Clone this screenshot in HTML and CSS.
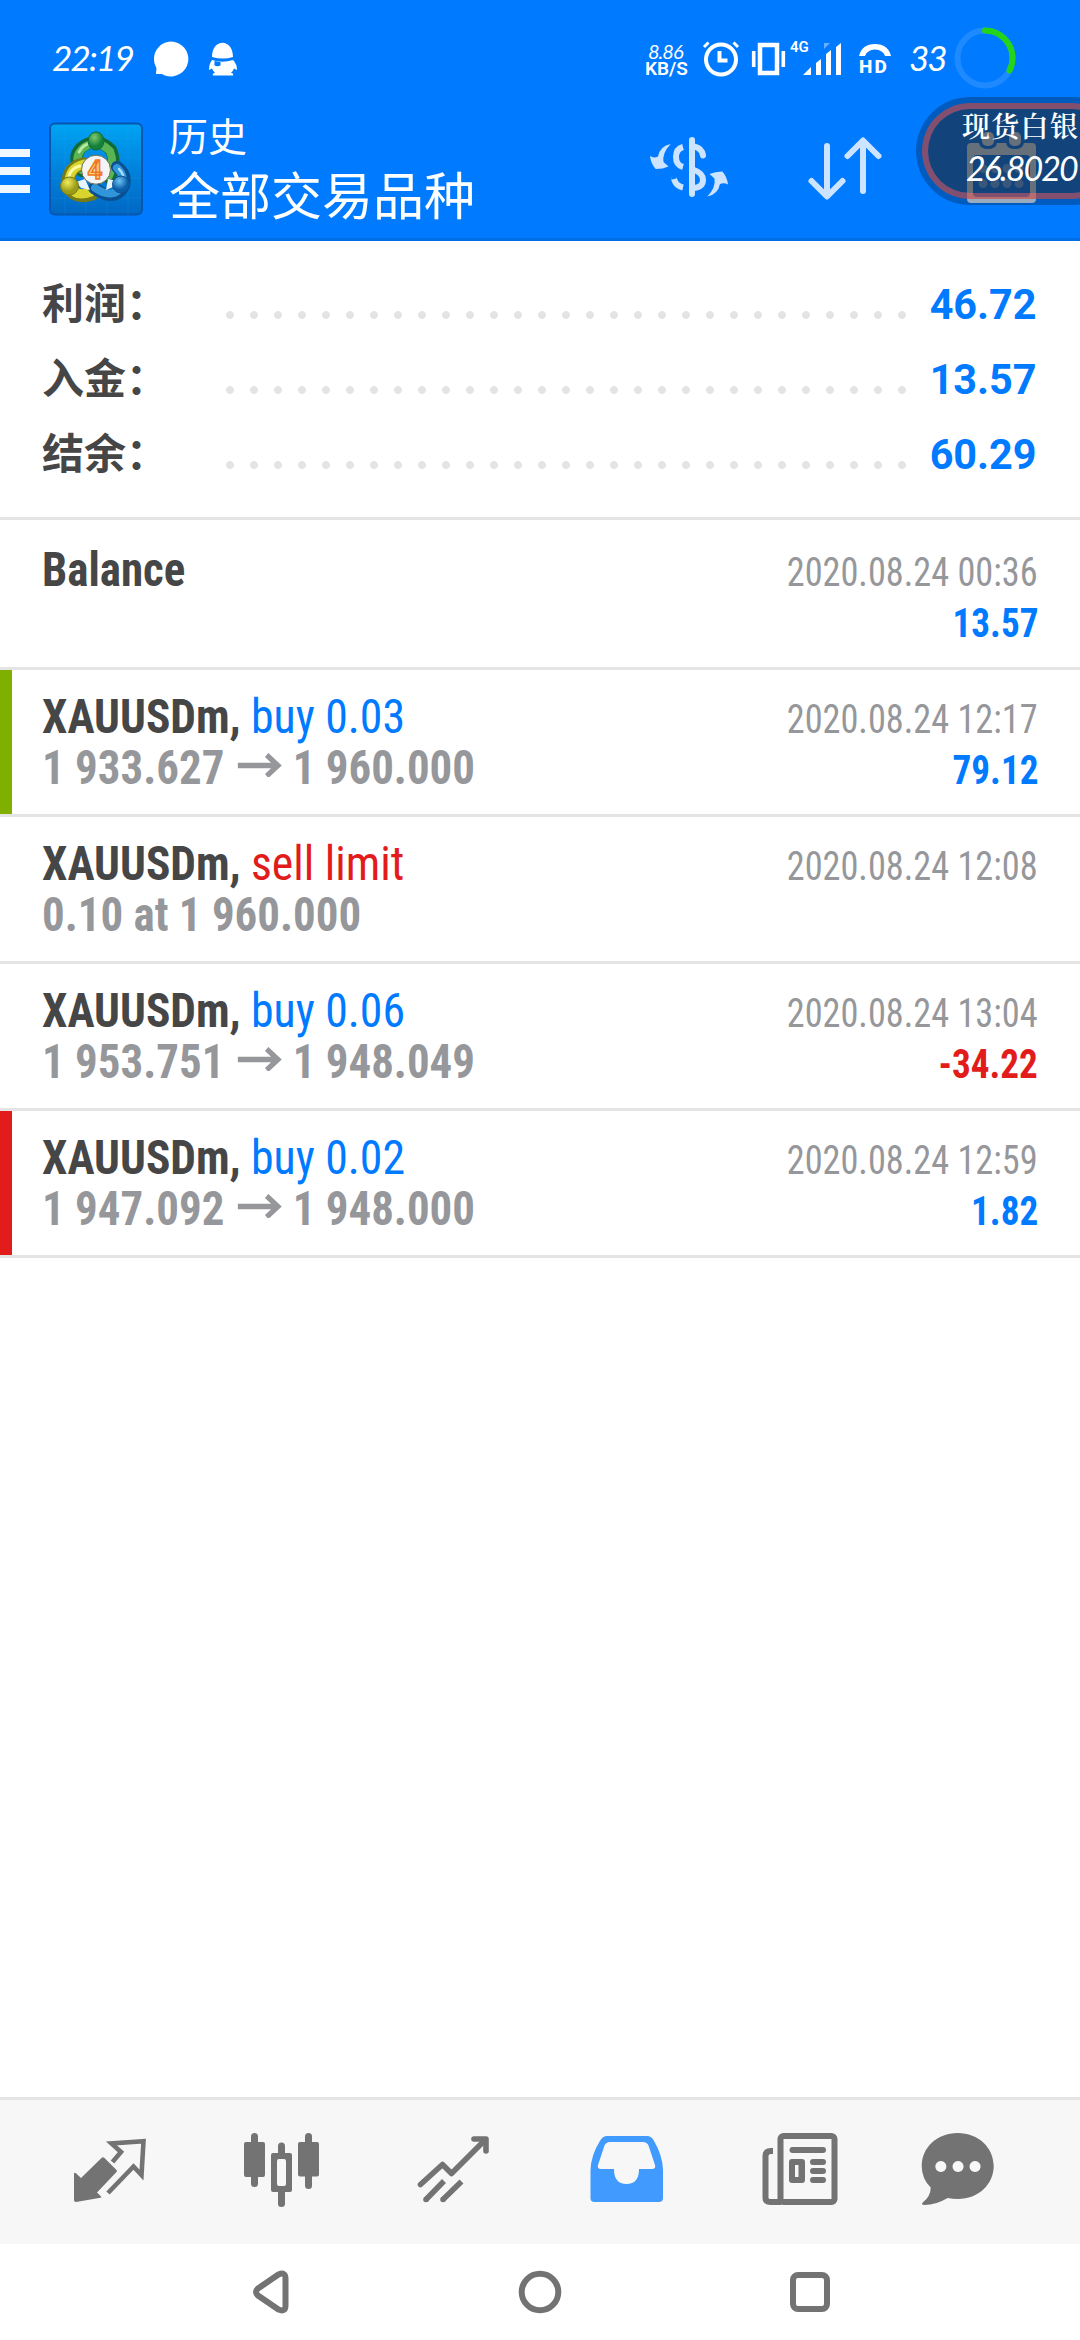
FILE: index.html
```html
<!DOCTYPE html>
<html lang="zh-CN">
<head>
<meta charset="utf-8">
<title>历史</title>
<link rel="stylesheet" href="styles.css">
</head>
<body>
<header class="top">
  <div class="status">
    <span class="clock">22:19</span>
    <svg class="notices" width="90" height="40" viewBox="150 39 90 40" fill="#fff">
      <path d="M171 41.5a17.5 17.500 0 1 1-6 34q-2-.9-3-1.500h-6l.5-6A17.500 17.500 0 0 1 171 41.500Z"/>
      <path d="M212 57c0-19 21-19 21 0q-10 3-21 0ZM212 60q10 3.500 21 0 4 4 4 10l-3-1.500q-1 3-3 4 3 1 2 3h-20q-1-2 2-3-2-1-3-4l-3 1.500q0-6 3-10Z"/>
      <path d="M214.500 61l6 1v3.500q-3 1.500-6 0Z" fill="#007aff"/>
    </svg>
    <div class="speed"><span class="speed-value">8.86</span><span class="speed-unit">KB/S</span></div>
    <svg class="signals" width="90" height="40" viewBox="700 39 90 40" fill="none" stroke="#fff">
      <circle cx="721" cy="59.500" r="15" stroke-width="4"/>
      <path d="M719.500 51v9.500h8" stroke-width="4"/>
      <path d="M704 47l4.500-4.500M738 47l-4.500-4.500" stroke-width="3"/>
      <rect x="760" y="45" width="17" height="28" stroke-width="4.500"/>
      <path d="M753.700 51v16M783.300 51v16" stroke-width="3.600"/>
    </svg>
    <span class="net">4G</span>
    <svg class="bars" width="40" height="40" viewBox="803 39 40 40" fill="#fff">
      <path d="M803 75h8v-8ZM816 75v-12l5-4v16ZM826 75v-21l5-4v25ZM836 75V47l5-4v32Z"/>
      <path d="M824 43h6l-6 6Z" opacity=".4"/>
    </svg>
    <div class="hd">
      <svg width="32" height="13" viewBox="859 43 32 13"><path d="M859 55q3-12 16-12t16 12h-6q-2-6-10-6.500-8 .5-10 6.500Z" fill="#fff"/></svg>
      <span>HD</span>
    </div>
    <span class="battery">33</span>
    <svg class="ring" width="62" height="62" viewBox="-31 -31 62 62" fill="none" stroke-width="6">
      <circle r="27.500" stroke="#1f8aff"/>
      <path d="M0-27.500A27.500 27.500 0 0 1 24.500 12.500" stroke="#24d41a" stroke-linecap="round"/>
    </svg>
  </div>
  <div class="toolbar">
    <div class="menu"><i></i><i></i><i></i></div>
    <svg class="logo" width="96" height="96" viewBox="48 121 96 96">
      <defs>
        <linearGradient id="sky" x2="0" y2="1"><stop stop-color="#00a4f4"/><stop offset=".5" stop-color="#0083dd"/><stop offset="1" stop-color="#0068c4"/></linearGradient>
        <radialGradient id="gr" cx=".4" cy=".3"><stop stop-color="#7fc96d"/><stop offset="1" stop-color="#15803a"/></radialGradient>
        <radialGradient id="ye" cx=".4" cy=".3"><stop stop-color="#f1ec5e"/><stop offset="1" stop-color="#9c9c18"/></radialGradient>
        <radialGradient id="bl" cx=".4" cy=".3"><stop stop-color="#6cc4f2"/><stop offset="1" stop-color="#0a5ea8"/></radialGradient>
      </defs>
      <rect x="50" y="123.500" width="92" height="91" rx="5" fill="url(#sky)" stroke="#0757ad" stroke-width="2"/>
      <path d="M65 124v90M86 124v90M107 124v90M128 124v90M51 138h90M51 158h90M51 178h90M51 198h90" stroke="#3bb2f5" stroke-opacity=".15"/>
      <g fill="none" stroke-linecap="round">
        <path d="M82 171Q71 158 81 148Q96 135 111 150Q117 164 109 178" stroke="#126a35" stroke-width="12"/>
        <path d="M82 170Q73 158 82 149Q96 137 110 151Q115 164 109 176" stroke="#59b454" stroke-width="8"/>
        <path d="M79 152Q83 144 92 143" stroke="#b8e8a2" stroke-width="3"/>
        <path d="M84 164Q67 167 68 185Q74 200 92 194" stroke="#777b16" stroke-width="13"/>
        <path d="M84 164Q68 168 69 185Q75 198 91 192" stroke="#d9d52c" stroke-width="9"/>
        <path d="M69 176Q71 168 80 166" stroke="#fbf8a0" stroke-width="3"/>
        <path d="M117 167Q127 174 124 186Q115 203 94 188" stroke="#0a5093" stroke-width="12"/>
        <path d="M117 168Q125 175 122 186Q113 200 95 188" stroke="#3195da" stroke-width="8"/>
        <path d="M119 169Q125 175 123 182" stroke="#a9ddf8" stroke-width="2.500"/>
      </g>
      <path d="M76 182l9-3 5 11-9-2ZM106 190l2-11 9 2-4 6Z" fill="#e7f4fb"/>
      <ellipse cx="96" cy="141" rx="8" ry="9" fill="url(#gr)" stroke="#126a35"/>
      <circle cx="69.500" cy="186" r="9" fill="url(#ye)" stroke="#777b16"/>
      <circle cx="121" cy="184.500" r="8.500" fill="url(#bl)" stroke="#0a5093"/>
      <circle cx="96" cy="169.700" r="14.500" fill="#f4f4f5" stroke="#6a6f58"/>
      <text class="logo-digit" x="95" y="179" text-anchor="middle">4</text>
    </svg>
    <div class="titles"><div class="title">历史</div><div class="subtitle">全部交易品种</div></div>
    <svg class="tools" width="406" height="84" viewBox="644 127 406 84" fill="none" stroke="#cce4ff" stroke-width="6" stroke-linecap="round">
      <g fill="#cce4ff" stroke="none">
        <path id="turn" d="M671.700 144Q663 153 664.500 162L669.500 166.500Q664 169 656.700 169Q652 164 651 156Q655 158.500 659 156.500Q661 146 671.700 144Z"/>
        <use href="#turn" transform="rotate(180 690 170.300)"/>
      </g>
      <path d="M693 140v54"/>
      <path d="M684 147Q677 149 677 157T684 167" stroke-linecap="butt"/>
      <path d="M695 146.500Q703 148 704 155.500M695 170Q704 173 704 180T695 188"/>
      <path d="M675 179Q677 186 684 187.500" stroke-linecap="butt"/><circle cx="675" cy="179" r=".1"/>
      <path d="M828 146v50M812.500 181L828 196.500 843.500 181M864 191v-50M848.500 156L864 140.500 879.500 156" stroke-linejoin="round"/>
      <g fill="#cce4ff" stroke="none">
        <path fill-rule="evenodd" d="M972 143h8q1 6 9 6t9-6h9q1 6 9 6t9-6h8q4 0 4 4v52q0 4-4 4h-61q-4 0-4-4v-52q0-4 4-4ZM978 155q-4 0-4 4v34q0 4 4 4h49q4 0 4-4v-34q0-4-4-4Z"/>
        <rect x="983" y="132" width="12" height="14" rx="5"/><rect x="1010" y="132" width="12" height="14" rx="5"/>
        <g opacity=".45"><circle cx="984" cy="168.500" r="4.500"/><circle cx="996" cy="168.500" r="4.500"/><circle cx="1008" cy="168.500" r="4.500"/><circle cx="1020" cy="168.500" r="4.500"/><circle cx="984" cy="183.500" r="4.500"/><circle cx="996" cy="183.500" r="4.500"/><circle cx="1008" cy="183.500" r="4.500"/><circle cx="1020" cy="183.500" r="4.500"/></g>
      </g>
    </svg>
  </div>
</header>
<main class="history">
  <section class="summary">
    <div class="sum"><span class="label">利润：</span><i class="dots"></i><b>46.72</b></div>
    <div class="sum"><span class="label">入金：</span><i class="dots"></i><b>13.57</b></div>
    <div class="sum"><span class="label">结余：</span><i class="dots"></i><b>60.29</b></div>
  </section>
  <article class="deal first">
    <div class="line"><span class="symbol balance">Balance</span><time>2020.08.24 00:36</time></div>
    <div class="line"><span class="value">13.57</span></div>
  </article>
  <article class="deal tp">
    <div class="line"><span class="symbol">XAUUSDm,</span><span class="side">buy 0.03</span><time>2020.08.24 12:17</time></div>
    <div class="line"><span class="price">1 933.627<svg class="arrow" width="48" height="24" viewBox="0 0 48 24"><path d="M0 12.500H42M31 2L43 12.500 31 23" fill="none" stroke="#96979b" stroke-width="5.500"/></svg>1 960.000</span><span class="value">79.12</span></div>
  </article>
  <article class="deal">
    <div class="line"><span class="symbol">XAUUSDm,</span><span class="side sell">sell limit</span><time>2020.08.24 12:08</time></div>
    <div class="line"><span class="price">0.10 at 1 960.000</span></div>
  </article>
  <article class="deal">
    <div class="line"><span class="symbol">XAUUSDm,</span><span class="side">buy 0.06</span><time>2020.08.24 13:04</time></div>
    <div class="line"><span class="price">1 953.751<svg class="arrow" width="48" height="24" viewBox="0 0 48 24"><path d="M0 12.500H42M31 2L43 12.500 31 23" fill="none" stroke="#96979b" stroke-width="5.500"/></svg>1 948.049</span><span class="value loss">-34.22</span></div>
  </article>
  <article class="deal sl">
    <div class="line"><span class="symbol">XAUUSDm,</span><span class="side">buy 0.02</span><time>2020.08.24 12:59</time></div>
    <div class="line"><span class="price">1 947.092<svg class="arrow" width="48" height="24" viewBox="0 0 48 24"><path d="M0 12.500H42M31 2L43 12.500 31 23" fill="none" stroke="#96979b" stroke-width="5.500"/></svg>1 948.000</span><span class="value">1.82</span></div>
  </article>
</main>
<nav class="tabs">
  <svg viewBox="24 2100 172 144"><path d="M74 2174q0-2 2-.7l5 4.700 20.500-20q1.500-1.500 3 0l12 12q1 1 0 2l-19.500 20.500 4 4q1 1-.5 1.200L76 2202q-2 0-2-2Z"/><path d="M112.500 2162l8.500-10-9.500-8.500L143.500 2141.300 141.500 2175l-8-8.500L108 2193" fill="none" stroke="#737373" stroke-width="4.600"/></svg>
  <svg viewBox="196 2100 172 144"><rect x="244" y="2142" width="21" height="35" rx="2"/><rect x="251" y="2133" width="7" height="54" rx="3.500"/><rect x="298" y="2142" width="21" height="34.500" rx="2"/><rect x="305" y="2133" width="7" height="56" rx="3.500"/><path fill-rule="evenodd" d="M278 2153v-7q0-3.500 3.500-3.500t3.500 3.500v7h5q2 0 2 2v35q0 2-2 2h-5v12q0 3-3.500 3t-3.500-3v-12h-5q-2 0-2-2v-35q0-2 2-2ZM279 2159q-2 0-2 2v23q0 2 2 2h5q2 0 2-2v-23q0-2-2-2Z"/></svg>
  <svg viewBox="368 2100 172 144" class="stroked"><path d="M420.500 2184.500L442.500 2164.500 451.500 2173.500 485 2140"/><path d="M474 2139H486V2151" /><path d="M426 2199.500h.1M443 2199.500h.1"/><path d="M426 2199.500L444 2181M443 2199.500L461.500 2181.500" stroke-linecap="butt"/></svg>
  <svg viewBox="540 2100 172 144" class="active"><path fill-rule="evenodd" d="M607 2136h40q4 0 6.500 4 9 15 9.500 30v28q0 4-4 4h-64.500q-4 0-4-4v-28q.5-15 10-30 2.500-4 6.500-4ZM610 2142q-4 0-5.500 3.500L598 2165q-1 4 3 4h13q0 15 12.500 15t12.500-15h13q4 0 3-4l-6.500-19.500q-1.500-3.500-5.500-3.500Z"/></svg>
  <svg viewBox="712 2100 172 144"><g fill="none" stroke="#737373" stroke-width="6"><rect x="780.500" y="2136" width="54" height="66" rx="3"/><path d="M773 2151h-2q-5.500 0-5.500 5v42q0 4 5 4h11"/><path d="M792.500 2150h30.500M813 2162h10M813 2171h10M813 2180h10" stroke-linecap="round"/></g><path fill-rule="evenodd" d="M792 2159h10q3 0 3 3v18q0 3-3 3h-10q-3 0-3-3v-18q0-3 3-3ZM795 2165v12h3.500v-12Z"/></svg>
  <svg viewBox="884 2100 172 144"><path fill-rule="evenodd" d="M957.700 2133c21 0 36 15 36 33s-15 33-36 33q-5 0-10-1-12 7-23 7-4 0-2-2.500 8-6 8-15-9-9-9-21.500c0-18 15-33 36-33ZM940.800 2161a5.500 5.500 0 1 0 .1 0ZM958 2161a5.500 5.500 0 1 0 .1 0ZM975 2161a5.500 5.500 0 1 0 .1 0Z"/></svg>
</nav>
<footer class="system">
  <svg viewBox="135 2244 270 96"><path d="M258 2288.500L278.500 2274.500Q285.500 2271.500 285.500 2278.500V2305.500Q285.500 2312.500 278.500 2309.500L258 2295.500Q254 2292 258 2288.500Z"/></svg>
  <svg viewBox="405 2244 270 96"><circle cx="540" cy="2292" r="18.300"/></svg>
  <svg viewBox="675 2244 270 96"><rect x="793" y="2275" width="34" height="34" rx="5"/></svg>
</footer>
<aside class="quote"><div class="quote-in"><span class="quote-name">现货白银</span><span class="quote-price">26.8020</span></div></aside>
</body>
</html>
```
FILE: styles.css
```css
* { box-sizing: border-box; }
body {
  margin: 0;
  width: 1080px;
  height: 2340px;
  position: relative;
  overflow: hidden;
  display: flex;
  flex-direction: column;
  background: #fff;
  font-family: Roboto, "Noto Sans CJK SC", sans-serif;
}
svg { display: block; flex: none; }
i { font-style: normal; }

.top {
  height: 241px;
  background: #007aff;
  border-bottom: 3px solid #006fe6;
  color: #fff;
}
.status {
  height: 85px;
  padding-left: 52px;
  padding-top: 12px;
  display: flex;
  align-items: center;
  line-height: 1;
  white-space: nowrap;
}
.status > * { flex: none; }
.clock, .battery, .speed-value, .quote-price {
  font-family: Lato, sans-serif;
  font-style: italic;
}
.clock { width: 98px; font-size: 35px; letter-spacing: -1.8px; margin-top: 17px; }
.notices { margin-top: 20px; margin-right: 405px; }
.speed { width: 55px; margin-top: 23px; display: flex; flex-direction: column; }
.speed-value { font-size: 20px; line-height: 17px; padding-left: 3px; letter-spacing: -1px; }
.speed-unit { font-size: 19px; line-height: 17px; font-weight: 600; }
.signals { margin-top: 20px; }
.net { width: 13px; font-size: 15px; font-weight: 600; margin-top: -3px; }
.bars { margin-top: 20px; margin-right: 16px; }
.hd { width: 50px; margin-top: 24px; display: flex; flex-direction: column; }
.hd span { font-size: 19px; line-height: 20px; font-weight: 800; letter-spacing: 2px; }
.battery { width: 45px; font-size: 35px; letter-spacing: -2px; margin-top: 17px; }
.ring { margin-top: 19px; }

.toolbar { height: 153px; display: flex; }
.menu { width: 48px; padding-top: 64px; display: flex; flex-direction: column; gap: 10px; }
.menu i { width: 30px; height: 8px; background: #f0f7ff; }
.logo { margin-top: 36px; }
.logo-digit { font: 700 26px Roboto, sans-serif; fill: #fbd08a; stroke: #f07818; stroke-width: 1.5px; }
.titles { width: 476px; padding: 23px 0 0 25px; margin-right: 24px; white-space: nowrap; font-family: "Noto Sans CJK SC", sans-serif; }
.title { font-size: 39px; line-height: 52px; }
.subtitle { font-size: 51px; line-height: 67px; }
.tools { margin-top: 42px; margin-left: -1px; }

.summary { padding: 22px 43px 29px 42px; border-bottom: 3px solid #e4e4e4; }
.sum {
  height: 75px;
  line-height: 75px;
  display: flex;
  align-items: baseline;
  font-size: 42px;
  color: #464646;
}
.label { width: 184px; height: 75px; font-family: "Noto Sans CJK SC", sans-serif; font-weight: 700; }
.dots {
  width: 696px;
  height: 8px;
  margin-right: auto;
  margin-bottom: 8px;
  background: radial-gradient(circle at 4px 4px, #e4e4e4 3.6px, transparent 4.3px) 0 0 / 24px 8px;
}
.sum b { color: #007aff; font-weight: 700; transform: scaleX(.985); transform-origin: right; }

.deal {
  height: 147px;
  padding: 21px 42px 0 42px;
  border-bottom: 3px solid #e4e4e4;
  background-repeat: no-repeat;
  background-size: 12px 144px;
  font-family: "Roboto Condensed", Roboto, sans-serif;
}
.first { height: 150px; padding-top: 24px; }
.tp { background-image: linear-gradient(#7fb000, #7fb000); }
.sl { background-image: linear-gradient(#e21b1b, #e21b1b); }
.line {
  height: 51px;
  line-height: 51px;
  display: flex;
  align-items: baseline;
  white-space: nowrap;
  font-size: 48px;
}
.line::before { content: "\200b"; width: 0; }
.symbol, .side, .price { transform-origin: left; }
.symbol { width: 209px; font-weight: 700; color: #464646; transform: scaleX(.945); }
.balance { transform: scaleX(.937); }
.side { color: #007aff; transform: scaleX(.953); }
.sell, .value.loss { color: #e21b1b; }
.price { font-weight: 700; color: #96979b; transform: scaleX(.936); }
.arrow { display: inline-block; margin: 0 11px 0 14px; vertical-align: 7px; }
.line time, .value { margin-left: auto; font-size: 40px; transform-origin: right; }
.line time { color: #96979b; transform: scaleX(.907); }
.value { font-weight: 700; color: #007aff; transform: scaleX(.93); }

.tabs {
  height: 147px;
  margin-top: auto;
  padding-left: 24px;
  display: grid;
  grid-template-columns: repeat(6, 172px);
  border-top: 3px solid #e4e4e4;
  background: #f7f7f7;
  fill: #737373;
}
.tabs svg { width: 172px; height: 144px; }
.tabs .active { fill: #419bff; }
.tabs .stroked { fill: none; stroke: #737373; stroke-width: 5.6px; stroke-linecap: round; stroke-linejoin: round; }
.system { height: 96px; display: flex; justify-content: center; fill: none; stroke: #737373; stroke-width: 6px; }
.system svg { width: 270px; height: 96px; }

.quote {
  position: absolute;
  left: 916px;
  top: 97px;
  width: 210px;
  height: 108px;
  padding: 6px;
  border-radius: 54px;
  background: rgba(0, 0, 0, .25);
}
.quote-in {
  height: 96px;
  padding-left: 34px;
  border: 6px solid rgba(200, 74, 66, .65);
  border-radius: 48px;
  background: rgba(40, 40, 40, .45) padding-box;
  color: #fff;
  white-space: nowrap;
  display: flex;
  flex-direction: column;
}
.quote-name { font-family: "Noto Serif CJK SC", "Noto Sans CJK SC", serif; font-weight: 600; font-size: 28px; line-height: 32px; letter-spacing: 1.3px; }
.quote-price { font-size: 34px; line-height: 54px; padding-left: 4px; letter-spacing: -2px; }
```
